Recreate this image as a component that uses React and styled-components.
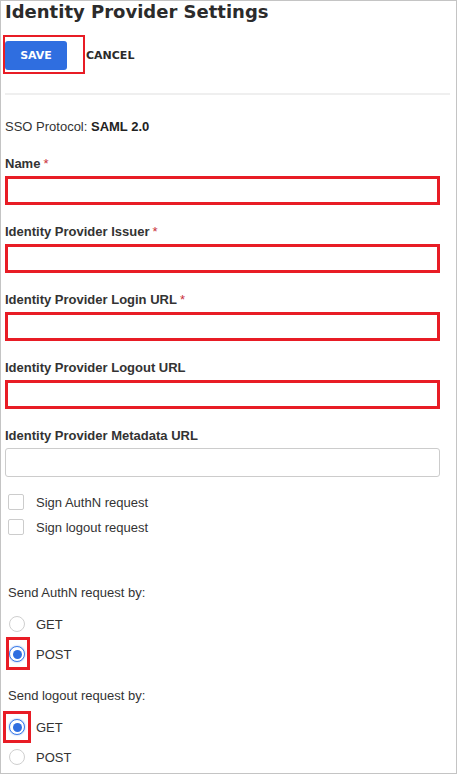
import React from "react";
import styled, { createGlobalStyle, css } from "styled-components";

const GlobalStyle = createGlobalStyle`
    html, body {
        margin: 0;
        padding: 0;
        background: #fff;
    }
`

const Frame = styled.div`
    width: 457px;
    height: 774px;
    box-sizing: border-box;
    border: 1px solid #c4c4c4;
    background: #fff;
    padding: 0 4px;
    font-family: "Liberation Sans", Arial, sans-serif;
    color: #333;
    overflow: hidden;
`

const Title = styled.h1`
    margin: 0;
    font-family: "DejaVu Sans", Verdana, sans-serif;
    font-size: 18px;
    line-height: 22px;
    font-weight: 700;
    color: #2b2b2b;
`

const ButtonRow = styled.div`
    display: flex;
    align-items: flex-start;
    margin-top: 12px;
    margin-left: -2px;
`

const Highlight = styled.div`
    border: 2px solid #e81c25;
    padding: 4px 16px 2px 0;
    display: flex;
`

const ActionButton = styled.button`
    font-family: "DejaVu Sans", Verdana, sans-serif;
    font-size: 11px;
    font-weight: 700;
    height: 29px;
    border: none;
    border-radius: 3px;
    cursor: pointer;
    ${props => props.$primary ? css`
        width: 62px;
        background: #2f6ee0;
        color: #fff;
    ` : css`
        margin-top: 6px;
        background: transparent;
        color: #2b2b2b;
        padding: 0 0 0 1px;
    `}
`

const Divider = styled.hr`
    margin: 19px 2px 0 0;
    height: 2px;
    border: none;
    background: #efefef;
`

const Protocol = styled.div`
    margin-top: 24px;
    font-size: 13px;
    line-height: 16px;

    b {
        font-weight: 700;
        color: #222;
    }
`

const Fields = styled.div`
    display: flex;
    flex-direction: column;
    gap: 19px;
    margin-top: 21px;
`

const Field = styled.div`
    display: flex;
    flex-direction: column;
`

const Label = styled.label`
    font-size: 13px;
    line-height: 16px;
    font-weight: 700;
    color: #333;
`

const Required = styled.span`
    color: #c9303a;
    font-weight: 400;
    margin-left: 3px;
`

const TextInput = styled.input`
    margin-top: 4px;
    width: 435px;
    height: 29px;
    box-sizing: border-box;
    background: #fff;
    outline: none;
    ${props => props.$marked ? css`
        border: 3px solid #e81c25;
        border-radius: 0;
    ` : css`
        border: 1px solid #cccccc;
        border-radius: 3px;
    `}
`

const CheckList = styled.div`
    display: flex;
    flex-direction: column;
    gap: 9px;
    margin-top: 17px;
    margin-left: 3px;
`

const OptionRow = styled.label`
    display: flex;
    align-items: center;
    gap: 12px;
    height: 16px;
    font-size: 13px;
    color: #333;
`

const CheckBox = styled.span`
    width: 16px;
    height: 16px;
    box-sizing: border-box;
    border: 1px solid #cccccc;
    border-radius: 2px;
    background: #fff;
`

const Group = styled.div`
    margin-top: ${props => props.$top}px;
    margin-left: 3px;
`

const GroupLabel = styled.div`
    font-size: 13px;
    line-height: 16px;
    color: #333;
`

const RadioList = styled.div`
    display: flex;
    flex-direction: column;
    gap: 14px;
    margin-top: 15px;
    margin-left: 1px;
`

const RadioMark = styled.span`
    position: relative;
    width: 16px;
    height: 16px;
    box-sizing: border-box;
    border-radius: 50%;
    background: #fff;
    display: flex;
    align-items: center;
    justify-content: center;
    ${props => props.$checked ? css`
        border: 1px solid #3b7be8;
        box-shadow: 0 0 2px #8ab0f2;
        &::before {
            content: "";
            width: 9px;
            height: 9px;
            border-radius: 50%;
            background: #2f6ee0;
        }
    ` : css`
        border: 1px solid #cfcfcf;
    `}
    ${props => props.$box && css`
        &::after {
            content: "";
            position: absolute;
            top: -${props.$box[0]}px;
            right: -${props.$box[1]}px;
            bottom: -${props.$box[2]}px;
            left: -${props.$box[3]}px;
            border: 3px solid #e81c25;
        }
    `}
`

const RadioText = styled.span`
    margin-left: -1px;
`

const fields = [
    { label: "Name", required: true, marked: true },
    { label: "Identity Provider Issuer", required: true, marked: true },
    { label: "Identity Provider Login URL", required: true, marked: true },
    { label: "Identity Provider Logout URL", required: false, marked: true },
    { label: "Identity Provider Metadata URL", required: false, marked: false },
]

const groups = [
    {
        title: "Send AuthN request by:",
        top: 50,
        options: [
            { name: "GET" },
            { name: "POST", checked: true, box: [10, 6, 9, 4] },
        ],
    },
    {
        title: "Send logout request by:",
        top: 26,
        options: [
            { name: "GET", checked: true, box: [9, 7, 9, 7] },
            { name: "POST" },
        ],
    },
]

const App = () => {
    return (
        <>
            <GlobalStyle />
            <Frame>
                <Title>Identity Provider Settings</Title>
                <ButtonRow>
                    <Highlight>
                        <ActionButton $primary>SAVE</ActionButton>
                    </Highlight>
                    <ActionButton>CANCEL</ActionButton>
                </ButtonRow>
                <Divider />
                <Protocol>SSO Protocol: <b>SAML 2.0</b></Protocol>
                <Fields>
                    {
                        fields.map((item, index) => (
                            <Field key={index}>
                                <Label>
                                    {item.label}
                                    {item.required && <Required>*</Required>}
                                </Label>
                                <TextInput $marked={item.marked} />
                            </Field>
                        ))
                    }
                </Fields>
                <CheckList>
                    <OptionRow><CheckBox />Sign AuthN request</OptionRow>
                    <OptionRow><CheckBox />Sign logout request</OptionRow>
                </CheckList>
                {
                    groups.map((group, index) => (
                        <Group key={index} $top={group.top}>
                            <GroupLabel>{group.title}</GroupLabel>
                            <RadioList>
                                {
                                    group.options.map((opt, i) => (
                                        <OptionRow key={i}>
                                            <RadioMark $checked={opt.checked} $box={opt.box} />
                                            <RadioText>{opt.name}</RadioText>
                                        </OptionRow>
                                    ))
                                }
                            </RadioList>
                        </Group>
                    ))
                }
            </Frame>
        </>
    )
}

export default App;
